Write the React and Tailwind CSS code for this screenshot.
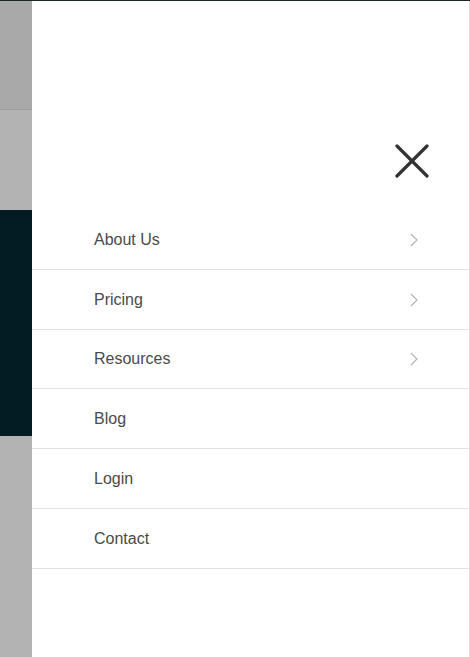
import React from "react";

const items = [
  { label: "About Us", chevron: true, h: "h-[60px]" },
  { label: "Pricing", chevron: true, h: "h-[60px]" },
  { label: "Resources", chevron: true, h: "h-[59px]" },
  { label: "Blog", h: "h-[60px]" },
  { label: "Login", h: "h-[60px]" },
  { label: "Contact", h: "h-[60px]" },
];

function Chevron() {
  return (
    <svg width="10" height="16" viewBox="0 0 10 16" fill="none" className="mr-[50px]">
      <path d="M2 2 L8 8 L2 14" stroke="#b0b0b0" strokeWidth="1.1" />
    </svg>
  );
}

export default function App() {
  return (
    <div className="w-[470px] h-[657px] overflow-hidden flex flex-col bg-white" style={{ fontFamily: '"Liberation Sans", Arial, sans-serif' }}>
      <div className="h-px bg-[#1c2528] shrink-0" />
      <div className="flex flex-1">
        <div className="w-[32px] flex flex-col shrink-0">
          <div className="h-[108px] bg-[#a9a9a9]" />
          <div className="h-px bg-[#9e9e9e]" />
          <div className="h-[100px] bg-[#b3b3b3]" />
          <div className="h-[226px] bg-[#011c22]" />
          <div className="flex-1 bg-[#b3b3b3]" />
        </div>
        <div className="flex-1 flex flex-col border-r border-[#e3e3e3]">
          <div className="h-[209px] flex items-end justify-end pr-[40px] pb-[32px]">
            <svg width="34" height="34" viewBox="0 0 34 34" fill="none">
              <path d="M2 2 L32 32 M32 2 L2 32" stroke="#333333" strokeWidth="3.2" strokeLinecap="round" />
            </svg>
          </div>
          {items.map((it) => (
            <div key={it.label} className={`${it.h} border-b border-[#e2e2e2] flex items-center justify-between pl-[62px]`}>
              <span className="text-[16px] text-[#4a4a4a]">{it.label}</span>
              {it.chevron && <Chevron />}
            </div>
          ))}
        </div>
      </div>
    </div>
  );
}
